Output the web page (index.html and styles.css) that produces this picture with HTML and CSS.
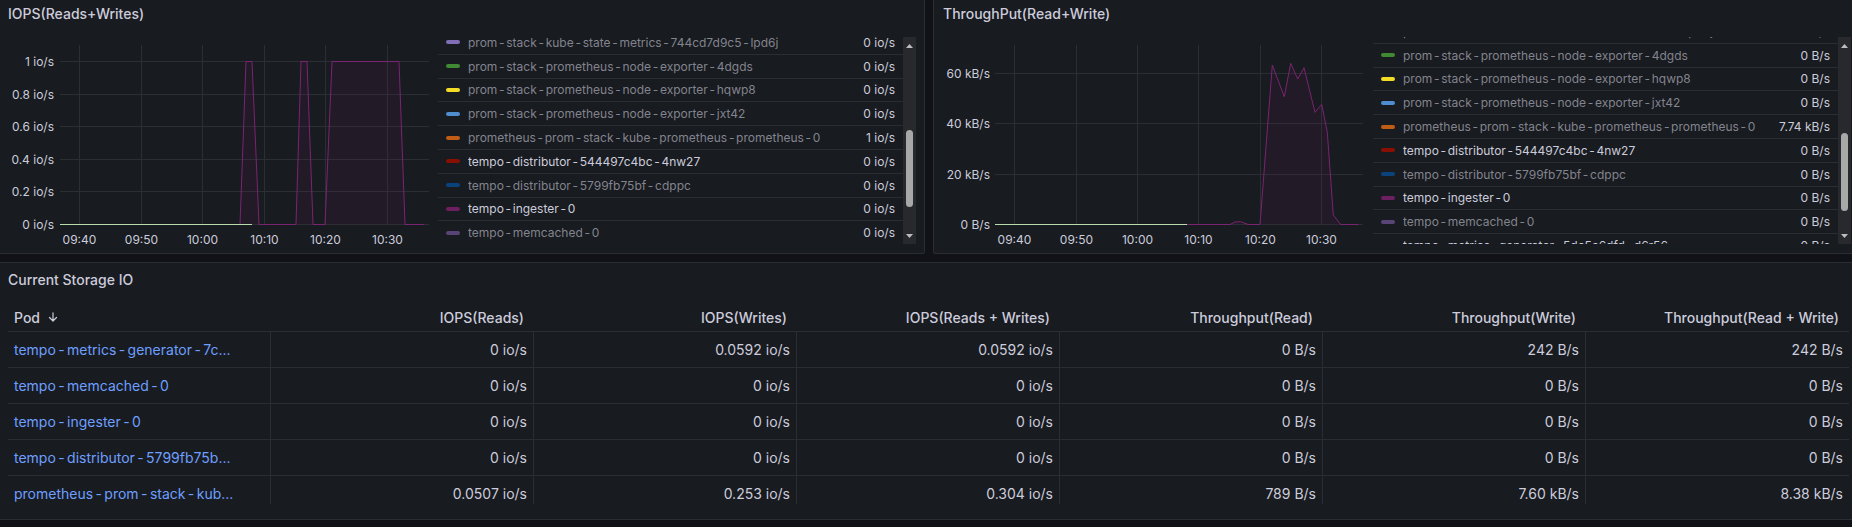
FILE: index.html
```html
<!DOCTYPE html>
<html lang="en">
<head>
<meta charset="utf-8">
<title>Storage IO</title>
<link rel="stylesheet" href="styles.css">
</head>
<body>
<div class="dash">
  <div class="row-top">
    <section class="panel">
      <header class="panel-header"><h2 class="panel-title">IOPS(Reads+Writes)</h2></header>
      <div class="graph-body">
        <svg class="plot" width="439" height="224" viewBox="-1 29 439 224">
          <g class="grid">
            <line x1="60" x2="429" y1="61.5" y2="61.5"/>
            <line x1="60" x2="429" y1="94.5" y2="94.5"/>
            <line x1="60" x2="429" y1="126.5" y2="126.5"/>
            <line x1="60" x2="429" y1="159.5" y2="159.5"/>
            <line x1="60" x2="429" y1="191.5" y2="191.5"/>
            <line x1="60" x2="429" y1="224.5" y2="224.5"/>
            <line x1="79.5" x2="79.5" y1="45" y2="225"/>
            <line x1="141.5" x2="141.5" y1="45" y2="225"/>
            <line x1="202.5" x2="202.5" y1="45" y2="225"/>
            <line x1="264.5" x2="264.5" y1="45" y2="225"/>
            <line x1="325.5" x2="325.5" y1="45" y2="225"/>
            <line x1="387.5" x2="387.5" y1="45" y2="225"/>
          </g>
          <g class="ylab">
            <text x="54" y="65.5">1 io/s</text>
            <text x="54" y="98.5">0.8 io/s</text>
            <text x="54" y="130.5">0.6 io/s</text>
            <text x="54" y="163.5">0.4 io/s</text>
            <text x="54" y="195.5">0.2 io/s</text>
            <text x="54" y="228.5">0 io/s</text>
          </g>
          <g class="xlab">
            <text x="79.5" y="243.5">09:40</text>
            <text x="141.5" y="243.5">09:50</text>
            <text x="202.5" y="243.5">10:00</text>
            <text x="264.5" y="243.5">10:10</text>
            <text x="325.5" y="243.5">10:20</text>
            <text x="387.5" y="243.5">10:30</text>
          </g>
          <path class="area" d="M240 224.5 L246 61.5 L252 61.5 L259 224.5 L296 224.5 L301 61.5 L307 61.5 L313 224.5 L325 224.5 L332 61.5 L399 61.5 L405 224.5 L424 224.5 Z"/>
          <path class="line-ing" d="M240 224.5 L246 61.5 L252 61.5 L259 224.5 L296 224.5 L301 61.5 L307 61.5 L313 224.5 L325 224.5 L332 61.5 L399 61.5 L405 224.5 L424 224.5"/>
          <path class="line-gen" d="M60 224.5 L252 224.5"/>
        </svg>
        <div class="legend">
          <div class="legend-view">
            <ul class="legend-list off-l">
              <li class="legend-row"><span class="sw c-kube"></span><span class="name">prom-stack-kube-state-metrics-744cd7d9c5-lpd6j</span><span class="val">0 io/s</span></li>
              <li class="legend-row"><span class="sw c-ne1"></span><span class="name">prom-stack-prometheus-node-exporter-4dgds</span><span class="val">0 io/s</span></li>
              <li class="legend-row"><span class="sw c-ne2"></span><span class="name">prom-stack-prometheus-node-exporter-hqwp8</span><span class="val">0 io/s</span></li>
              <li class="legend-row"><span class="sw c-ne3"></span><span class="name">prom-stack-prometheus-node-exporter-jxt42</span><span class="val">0 io/s</span></li>
              <li class="legend-row"><span class="sw c-prom"></span><span class="name">prometheus-prom-stack-kube-prometheus-prometheus-0</span><span class="val">1 io/s</span></li>
              <li class="legend-row on"><span class="sw c-dist1"></span><span class="name">tempo-distributor-544497c4bc-4nw27</span><span class="val">0 io/s</span></li>
              <li class="legend-row"><span class="sw c-dist2"></span><span class="name">tempo-distributor-5799fb75bf-cdppc</span><span class="val">0 io/s</span></li>
              <li class="legend-row on"><span class="sw c-ing"></span><span class="name">tempo-ingester-0</span><span class="val">0 io/s</span></li>
              <li class="legend-row"><span class="sw c-mem"></span><span class="name">tempo-memcached-0</span><span class="val">0 io/s</span></li>
              <li class="legend-row on"><span class="sw c-gen"></span><span class="name">tempo-metrics-generator-5dc5c6dfd-d6r56</span><span class="val">0 io/s</span></li>
            </ul>
          </div>
          <div class="vscroll">
            <svg class="sb-btn" width="13" height="14" viewBox="0 0 13 14"><polygon points="3,11 6.5,7 10,11"/></svg>
            <div class="sb-track"><div class="sb-thumb thumb-l"></div></div>
            <svg class="sb-btn" width="13" height="14" viewBox="0 0 13 14"><polygon points="3,4 6.5,8 10,4"/></svg>
          </div>
        </div>
      </div>
    </section>

    <section class="panel">
      <header class="panel-header"><h2 class="panel-title">ThroughPut(Read+Write)</h2></header>
      <div class="graph-body">
        <svg class="plot" width="439" height="224" viewBox="934 29 439 224">
          <g class="grid">
            <line x1="995" x2="1363" y1="73.5" y2="73.5"/>
            <line x1="995" x2="1363" y1="123.5" y2="123.5"/>
            <line x1="995" x2="1363" y1="174.5" y2="174.5"/>
            <line x1="995" x2="1363" y1="224.5" y2="224.5"/>
            <line x1="1014.5" x2="1014.5" y1="45" y2="225"/>
            <line x1="1076.5" x2="1076.5" y1="45" y2="225"/>
            <line x1="1137.5" x2="1137.5" y1="45" y2="225"/>
            <line x1="1198.5" x2="1198.5" y1="45" y2="225"/>
            <line x1="1260.5" x2="1260.5" y1="45" y2="225"/>
            <line x1="1321.5" x2="1321.5" y1="45" y2="225"/>
          </g>
          <g class="ylab">
            <text x="990" y="77.5">60 kB/s</text>
            <text x="990" y="127.5">40 kB/s</text>
            <text x="990" y="178.5">20 kB/s</text>
            <text x="990" y="228.5">0 B/s</text>
          </g>
          <g class="xlab">
            <text x="1014.5" y="243.5">09:40</text>
            <text x="1076.5" y="243.5">09:50</text>
            <text x="1137.5" y="243.5">10:00</text>
            <text x="1198.5" y="243.5">10:10</text>
            <text x="1260.5" y="243.5">10:20</text>
            <text x="1321.5" y="243.5">10:30</text>
          </g>
          <path class="area" d="M1187 224.5 L1230 224.5 L1235 222 L1240.5 221.7 L1245 223.3 L1248 224.5 L1260 224.5 L1272.3 65 L1284.3 96.7 L1290.7 63.3 L1297.7 79 L1304 67.7 L1315 112.3 L1321.7 104.3 L1327.3 132.3 L1333.3 215 L1340.7 224.5 L1358.3 224.5 Z"/>
          <path class="line-ing" d="M1187 224.5 L1230 224.5 L1235 222 L1240.5 221.7 L1245 223.3 L1248 224.5 L1260 224.5 L1272.3 65 L1284.3 96.7 L1290.7 63.3 L1297.7 79 L1304 67.7 L1315 112.3 L1321.7 104.3 L1327.3 132.3 L1333.3 215 L1340.7 224.5 L1358.3 224.5"/>
          <path class="line-gen" d="M995 224.5 L1187 224.5"/>
        </svg>
        <div class="legend">
          <div class="legend-view">
            <ul class="legend-list off-r">
              <li class="legend-row"><span class="sw c-kube"></span><span class="name">prom-stack-kube-state-metrics-744cd7d9c5-lpd6j</span><span class="val">0 B/s</span></li>
              <li class="legend-row"><span class="sw c-ne1"></span><span class="name">prom-stack-prometheus-node-exporter-4dgds</span><span class="val">0 B/s</span></li>
              <li class="legend-row"><span class="sw c-ne2"></span><span class="name">prom-stack-prometheus-node-exporter-hqwp8</span><span class="val">0 B/s</span></li>
              <li class="legend-row"><span class="sw c-ne3"></span><span class="name">prom-stack-prometheus-node-exporter-jxt42</span><span class="val">0 B/s</span></li>
              <li class="legend-row"><span class="sw c-prom"></span><span class="name">prometheus-prom-stack-kube-prometheus-prometheus-0</span><span class="val">7.74 kB/s</span></li>
              <li class="legend-row on"><span class="sw c-dist1"></span><span class="name">tempo-distributor-544497c4bc-4nw27</span><span class="val">0 B/s</span></li>
              <li class="legend-row"><span class="sw c-dist2"></span><span class="name">tempo-distributor-5799fb75bf-cdppc</span><span class="val">0 B/s</span></li>
              <li class="legend-row on"><span class="sw c-ing"></span><span class="name">tempo-ingester-0</span><span class="val">0 B/s</span></li>
              <li class="legend-row"><span class="sw c-mem"></span><span class="name">tempo-memcached-0</span><span class="val">0 B/s</span></li>
              <li class="legend-row on"><span class="sw c-gen"></span><span class="name">tempo-metrics-generator-5dc5c6dfd-d6r56</span><span class="val">0 B/s</span></li>
            </ul>
          </div>
          <div class="vscroll">
            <svg class="sb-btn" width="13" height="14" viewBox="0 0 13 14"><polygon points="3,11 6.5,7 10,11"/></svg>
            <div class="sb-track"><div class="sb-thumb thumb-r"></div></div>
            <svg class="sb-btn" width="13" height="14" viewBox="0 0 13 14"><polygon points="3,4 6.5,8 10,4"/></svg>
          </div>
        </div>
      </div>
    </section>
  </div>

  <section class="panel table-panel">
    <header class="panel-header"><h2 class="panel-title">Current Storage IO</h2></header>
    <div class="table">
      <div class="thead">
        <div class="th first">Pod
          <svg class="sort" width="12" height="12" viewBox="0 0 24 24"><path d="M12 3.5v16M5 13l7 7 7-7"/></svg>
        </div>
        <div class="th">IOPS(Reads)</div>
        <div class="th">IOPS(Writes)</div>
        <div class="th">IOPS(Reads + Writes)</div>
        <div class="th">Throughput(Read)</div>
        <div class="th">Throughput(Write)</div>
        <div class="th">Throughput(Read + Write)</div>
      </div>
      <div class="tbody">
        <div class="tr">
          <div class="td first"><a class="pod">tempo-metrics-generator-7c...</a></div>
          <div class="td">0 io/s</div><div class="td">0.0592 io/s</div><div class="td">0.0592 io/s</div>
          <div class="td">0 B/s</div><div class="td">242 B/s</div><div class="td">242 B/s</div>
        </div>
        <div class="tr">
          <div class="td first"><a class="pod">tempo-memcached-0</a></div>
          <div class="td">0 io/s</div><div class="td">0 io/s</div><div class="td">0 io/s</div>
          <div class="td">0 B/s</div><div class="td">0 B/s</div><div class="td">0 B/s</div>
        </div>
        <div class="tr">
          <div class="td first"><a class="pod">tempo-ingester-0</a></div>
          <div class="td">0 io/s</div><div class="td">0 io/s</div><div class="td">0 io/s</div>
          <div class="td">0 B/s</div><div class="td">0 B/s</div><div class="td">0 B/s</div>
        </div>
        <div class="tr">
          <div class="td first"><a class="pod">tempo-distributor-5799fb75b...</a></div>
          <div class="td">0 io/s</div><div class="td">0 io/s</div><div class="td">0 io/s</div>
          <div class="td">0 B/s</div><div class="td">0 B/s</div><div class="td">0 B/s</div>
        </div>
        <div class="tr">
          <div class="td first"><a class="pod">prometheus-prom-stack-kub...</a></div>
          <div class="td">0.0507 io/s</div><div class="td">0.253 io/s</div><div class="td">0.304 io/s</div>
          <div class="td">789 B/s</div><div class="td">7.60 kB/s</div><div class="td">8.38 kB/s</div>
        </div>
      </div>
    </div>
  </section>
</div>
<script src="script.js"></script>
</body>
</html>
```

FILE: script.js
```js
document.querySelectorAll('.name, .pod').forEach(function (el) {
  var parts = el.textContent.split('-');
  el.textContent = '';
  parts.forEach(function (part, i) {
    if (i > 0) {
      var h = document.createElement('span');
      h.className = 'hy';
      h.textContent = '-';
      el.appendChild(h);
    }
    el.appendChild(document.createTextNode(part));
  });
});
```

FILE: styles.css
```css
* { box-sizing: border-box; }

html, body {
  margin: 0;
  padding: 0;
}

body {
  width: 1852px;
  height: 527px;
  overflow: hidden;
  background: #111217;
  font-family: Inter, "Noto Sans", sans-serif;
  color: #ccccdc;
}

.dash {
  margin: -4px 0 0 -2px;
  width: 1862px;
  display: flex;
  flex-direction: column;
  gap: 8px;
}

.row-top {
  display: grid;
  grid-template-columns: 927px 927px;
  gap: 8px;
}

.panel {
  background: #181b1f;
  border: 1px solid #2a2d33;
  border-radius: 2px;
  height: 258px;
  display: flex;
  flex-direction: column;
  overflow: hidden;
}

.panel-header {
  height: 32px;
  flex: none;
  display: flex;
  align-items: center;
  padding: 0 9px;
}

.panel-title {
  margin: 0;
  font-size: 14px;
  font-weight: 500;
  color: #ccccdc;
  line-height: 17px;
}

.graph-body {
  flex: 1;
  display: flex;
  min-height: 0;
}

.plot {
  flex: none;
  display: block;
}

.grid line {
  stroke: #2b2e34;
  stroke-width: 1;
}

.ylab text {
  font-family: Inter, "Noto Sans", sans-serif;
  font-size: 12px;
  fill: #ccccdc;
  text-anchor: end;
}

.xlab text {
  font-family: Inter, "Noto Sans", sans-serif;
  font-size: 12px;
  fill: #ccccdc;
  text-anchor: middle;
}

.area {
  fill: #6d1f62;
  fill-opacity: 0.12;
  stroke: none;
}

.line-ing {
  fill: none;
  stroke: #7a2472;
  stroke-width: 1;
}

.line-gen {
  fill: none;
  stroke: #b7dbab;
  stroke-width: 1;
}

/* legend */
.legend {
  flex: none;
  width: 478px;
  height: 207px;
  margin-top: 8px;
  display: flex;
}

.legend-view {
  flex: 1;
  overflow: hidden;
}

.legend-list {
  list-style: none;
  margin: 0;
  padding: 0;
}

.legend-list.off-l { margin-top: -6px; }
.legend-list.off-r { margin-top: -17px; }

.legend-row {
  height: 23.8px;
  border-bottom: 1px solid #2a2d33;
  display: flex;
  align-items: center;
  padding: 0 8px;
  font-size: 12px;
  line-height: 15px;
}

.sw {
  flex: none;
  width: 14px;
  height: 4px;
  border-radius: 2px;
  margin-right: 8px;
}

.name {
  flex: 1;
  min-width: 0;
  white-space: nowrap;
  overflow: hidden;
  color: rgba(204, 204, 220, 0.6);
}

.legend-row.on .name { color: #ccccdc; }

.hy {
  margin: 0 1.7px;
}

.pod .hy {
  margin: 0 2.4px;
}

.val {
  flex: none;
  margin-left: 8px;
  color: #ccccdc;
}

.c-kube  { background: #806eb7; }
.c-ne1   { background: #3f8a32; }
.c-ne2   { background: #f2dc26; }
.c-ne3   { background: #4f8dd1; }
.c-prom  { background: #c15c17; }
.c-dist1 { background: #890f02; }
.c-dist2 { background: #0a437c; }
.c-ing   { background: #6d1f62; }
.c-mem   { background: #584477; }
.c-gen   { background: #b7dbab; }

/* fake scrollbar */
.vscroll {
  flex: none;
  width: 13px;
  display: flex;
  flex-direction: column;
  background: #28292d;
}

.sb-btn {
  display: block;
  flex: none;
}

.sb-btn polygon { fill: #bdbdbd; }

.sb-track {
  flex: 1;
  padding: 0 3px;
}

.sb-thumb {
  width: 7px;
  border-radius: 4px;
  background: #a8a8a8;
}

.thumb-l { margin-top: 79px; height: 77px; }
.thumb-r { margin-top: 82px; height: 78px; }

/* table */
.table {
  margin: 0 10px 0 9px;
  font-size: 14px;
}

.thead {
  display: grid;
  grid-template-columns: repeat(7, 263px);
  height: 37px;
  border-bottom: 1px solid #2a2d33;
}

.th {
  display: flex;
  align-items: flex-end;
  justify-content: flex-end;
  padding: 0 10px 5px 6px;
  font-weight: 500;
  line-height: 17px;
  color: #ccccdc;
  white-space: nowrap;
}

.th.first { justify-content: flex-start; }

.sort {
  margin: 0 0 3px 7px;
  flex: none;
}

.sort path {
  fill: none;
  stroke: #ccccdc;
  stroke-width: 2.4;
  stroke-linecap: round;
  stroke-linejoin: round;
}

.tbody {
  height: 172px;
  overflow: hidden;
}

.tr {
  display: grid;
  grid-template-columns: repeat(7, 263px);
  height: 36px;
  border-bottom: 1px solid #2a2d33;
}

.td {
  display: flex;
  align-items: center;
  justify-content: flex-end;
  padding: 0 6px;
  border-right: 1px solid #2a2d33;
  white-space: nowrap;
  overflow: hidden;
  color: #ccccdc;
}

.td:last-child { border-right: none; }

.td.first { justify-content: flex-start; }

.pod {
  color: #6e9fff;
  text-decoration: none;
}
```
